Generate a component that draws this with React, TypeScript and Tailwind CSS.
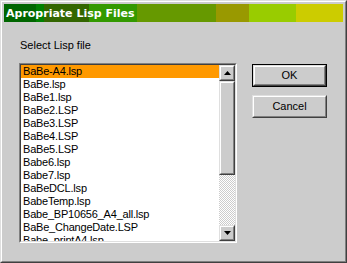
import React from "react";

const files = [
  "BaBe-A4.lsp",
  "BaBe.lsp",
  "BaBe1.lsp",
  "BaBe2.LSP",
  "BaBe3.LSP",
  "BaBe4.LSP",
  "BaBe5.LSP",
  "Babe6.lsp",
  "Babe7.lsp",
  "BaBeDCL.lsp",
  "BabeTemp.lsp",
  "Babe_BP10656_A4_all.lsp",
  "BaBe_ChangeDate.LSP",
  "Babe_printA4.lsp",
];

function Raised({ className = "", children }: { className?: string; children?: React.ReactNode }) {
  return (
    <div className={"border border-t-[#dfdfdf] border-l-[#dfdfdf] border-r-[#404040] border-b-[#404040] " + className}>
      <div className="w-full h-full border border-t-white border-l-white border-r-[#808080] border-b-[#808080] bg-[#cccccc] flex items-center justify-center">
        {children}
      </div>
    </div>
  );
}

function Arrow({ up }: { up?: boolean }) {
  return (
    <svg width="7" height="4" viewBox="0 0 7 4">
      {up ? <polygon points="3.5,0 7,4 0,4" fill="#000" /> : <polygon points="0,0 7,0 3.5,4" fill="#000" />}
    </svg>
  );
}

export default function App() {
  return (
    <div
      className="w-[347px] h-[263px] bg-[#cccccc] border border-t-[#dfdfdf] border-l-[#dfdfdf] border-r-[#404040] border-b-[#404040] text-black"
      style={{ fontFamily: '"Liberation Sans", Arial, sans-serif' }}
    >
      <div className="w-full h-full border border-t-white border-l-white border-r-[#808080] border-b-[#808080] p-[2px] flex flex-col">
        <div className="h-[18px] flex items-center pl-[2px] bg-[linear-gradient(to_right,#006600_0px,#006600_32px,#008000_32px,#008000_40px,#336600_40px,#336600_85px,#339900_85px,#339900_133px,#669900_133px,#669900_212px,#999900_212px,#999900_245px,#99cc00_245px,#99cc00_292px,#cccc00_292px,#cccc00_339px)]">
          <span className="text-white font-bold text-[11px] leading-[13px]" style={{ fontFamily: 'Tahoma, "DejaVu Sans", "Liberation Sans", sans-serif' }}>
            Apropriate Lisp Files
          </span>
        </div>
        <div className="flex flex-row">
          <div className="ml-[15px] flex flex-col">
            <div className="mt-[17px] pl-[1px] text-[11px] leading-[13px]">Select Lisp file</div>
            <div className="mt-[11px] w-[218px] h-[180px] border border-t-[#808080] border-l-[#808080] border-r-white border-b-white">
              <div className="w-full h-full border border-t-[#404040] border-l-[#404040] border-r-[#dfdfdf] border-b-[#dfdfdf] bg-white flex flex-row">
                <div className="flex-1 overflow-hidden flex flex-col">
                  {files.map((f, i) => (
                    <div
                      key={f}
                      className={
                        "h-[13px] shrink-0 pl-[2px] text-[11px] leading-[13px] tracking-[-0.2px] whitespace-nowrap " +
                        (i === 0 ? "bg-[#ff9900]" : "")
                      }
                    >
                      {f}
                    </div>
                  ))}
                </div>
                <div className="w-[16px] flex flex-col">
                  <Raised className="h-[16px] shrink-0">
                    <Arrow up />
                  </Raised>
                  <Raised className="h-[94px] shrink-0" />
                  <div className="flex-1 bg-[repeating-conic-gradient(#ffffff_0_25%,#cccccc_0_50%)] bg-[length:2px_2px]" />
                  <Raised className="h-[16px] shrink-0">
                    <Arrow />
                  </Raised>
                </div>
              </div>
            </div>
          </div>
          <div className="ml-[15px] pt-[42px] flex flex-col gap-[8px]">
            <div className="w-[75px] h-[23px] border border-black">
              <Raised className="w-full h-full">
                <span className="text-[11px] leading-[13px]">OK</span>
              </Raised>
            </div>
            <Raised className="w-[75px] h-[23px]">
              <span className="text-[11px] leading-[13px]">Cancel</span>
            </Raised>
          </div>
        </div>
      </div>
    </div>
  );
}
